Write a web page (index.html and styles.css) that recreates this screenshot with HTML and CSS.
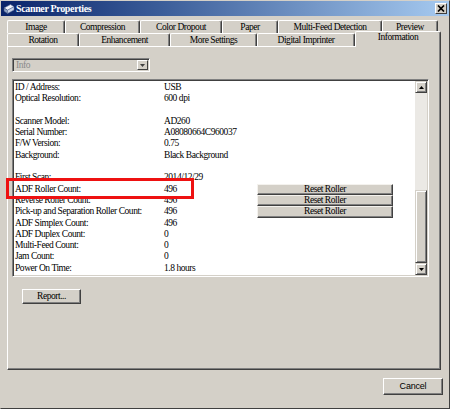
FILE: index.html
```html
<!DOCTYPE html>
<html>
<head>
<meta charset="utf-8">
<link rel="stylesheet" href="styles.css">
</head>
<body>
<div class="window">
  <div class="titlebar">
    <svg class="appicon" width="12" height="12" viewBox="0 0 12 12">
      <path d="M1 5 L7.5 1.5 L11 3.8 L4.5 7.2Z" fill="#f2f5fb" stroke="#5a6f98" stroke-width="0.6"/>
      <path d="M1 5 L4.5 7.2 L4.5 10.5 L1 8.3Z" fill="#8ea2c4" stroke="#3c4f78" stroke-width="0.5"/>
      <path d="M4.5 7.2 L11 3.8 L11 7 L4.5 10.5Z" fill="#c9d4e8" stroke="#5a6f98" stroke-width="0.5"/>
    </svg>
    <span class="title">Scanner Properties</span>
    <span class="close">
      <svg width="8" height="7" viewBox="0 0 8 7"><path d="M1 0.5 L7 6.5 M7 0.5 L1 6.5" stroke="#000" stroke-width="1.7"/></svg>
    </span>
  </div>
  <div class="content">
    <div class="tabs">
      <div class="tabrow row1">
        <div class="tab">Image</div>
        <div class="tab">Compression</div>
        <div class="tab">Color Dropout</div>
        <div class="tab">Paper</div>
        <div class="tab">Multi-Feed Detection</div>
        <div class="tab">Preview</div>
      </div>
      <div class="tabrow row2">
        <div class="tab">Rotation</div>
        <div class="tab">Enhancement</div>
        <div class="tab">More Settings</div>
        <div class="tab">Digital Imprinter</div>
        <div class="tab active">Information</div>
      </div>
    </div>
    <div class="panel">
      <div class="combo">
        <span class="combo-text">Info</span>
        <span class="combo-arrow"><svg width="5" height="3" viewBox="0 0 5 3"><path d="M0 0 H5 L2.5 3Z" fill="#404040"/></svg></span>
      </div>
      <div class="listbox">
        <div class="rows">
          <div class="row"><span>ID / Address:</span><span>USB</span></div>
          <div class="row"><span>Optical Resolution:</span><span>600 dpi</span></div>
          <div class="row"></div>
          <div class="row"><span>Scanner Model:</span><span>AD260</span></div>
          <div class="row"><span>Serial Number:</span><span>A08080664C960037</span></div>
          <div class="row"><span>F/W Version:</span><span>0.75</span></div>
          <div class="row"><span>Background:</span><span>Black Background</span></div>
          <div class="row"></div>
          <div class="row"><span>First Scan:</span><span>2014/12/29</span></div>
          <div class="row"><span>ADF Roller Count:</span><span>496</span><span class="rbtn">Reset Roller</span></div>
          <div class="row"><span>Reverse Roller Count:</span><span>496</span><span class="rbtn">Reset Roller</span></div>
          <div class="row"><span>Pick-up and Separation Roller Count:</span><span>496</span><span class="rbtn">Reset Roller</span></div>
          <div class="row"><span>ADF Simplex Count:</span><span>496</span></div>
          <div class="row"><span>ADF Duplex Count:</span><span>0</span></div>
          <div class="row"><span>Multi-Feed Count:</span><span>0</span></div>
          <div class="row"><span>Jam Count:</span><span>0</span></div>
          <div class="row"><span>Power On Time:</span><span>1.8 hours</span></div>
        </div>
        <div class="scrollbar">
          <div class="sb-btn"><svg width="5" height="3" viewBox="0 0 5 3"><path d="M0 3 H5 L2.5 0Z" fill="#000"/></svg></div>
          <div class="sb-track"><div class="sb-thumb"></div></div>
          <div class="sb-btn"><svg width="5" height="3" viewBox="0 0 5 3"><path d="M0 0 H5 L2.5 3Z" fill="#000"/></svg></div>
        </div>
      </div>
      <div class="btn report">Report...</div>
    </div>
    <div class="footer">
      <div class="btn cancel">Cancel</div>
    </div>
  </div>
  <div class="highlight"></div>
</div>
</body>
</html>
```
FILE: styles.css
```css
* { box-sizing: border-box; margin: 0; padding: 0; }
html, body { width: 450px; height: 409px; overflow: hidden; }
body {
  background: #d4d0c8;
  font-family: "Liberation Serif", serif;
  font-size: 9.5px;
  letter-spacing: -0.45px;
  color: #000;
}
.window {
  position: relative;
  width: 450px;
  height: 409px;
  background: #d4d0c8;
  border: 1px solid;
  border-color: #d4d0c8 #404040 #404040 #d4d0c8;
  display: flex;
  flex-direction: column;
}
.titlebar {
  height: 15px;
  display: flex;
  align-items: center;
  padding: 0 2px;
  background: linear-gradient(to right, #0a246a, #3a5c98 35%, #a6caf0);
}
.appicon { margin-right: 1px; flex: none; }
.title {
  color: #fff;
  font-weight: bold;
  font-size: 10px;
  letter-spacing: -0.35px;
}
.close {
  margin-left: auto;
  width: 12px;
  height: 11px;
  background: #d4d0c8;
  border: 1px solid;
  border-color: #fff #404040 #404040 #fff;
  display: flex;
  align-items: center;
  justify-content: center;
}
.content {
  flex: 1;
  display: flex;
  flex-direction: column;
  padding: 4px 6px 0 6px;
}
.tabrow {
  display: grid;
  height: 13px;
}
.row1 { grid-template-columns: 58px 75px 82px 56px 104px 56px; }
.row2 { grid-template-columns: 72px 91px 87px 98px 86px; }
.tab {
  height: 13px;
  border-top: 1px solid #fff;
  border-left: 1px solid #fff;
  border-right: 1px solid #404040;
  box-shadow: inset -1px 0 #808080;
  border-radius: 2px 2px 0 0;
  text-align: center;
  line-height: 12px;
  white-space: nowrap;
  background: #d4d0c8;
}
.tab.active {
  height: 16px;
  margin-top: -2px;
  position: relative;
  z-index: 1;
  line-height: 11px;
}
.panel {
  width: 434px;
  height: 324px;
  border: 1px solid;
  border-color: #fff #404040 #404040 #fff;
  box-shadow: inset -1px -1px #808080;
  padding: 11px 0 0 4px;
}
.combo {
  width: 138px;
  height: 14px;
  display: flex;
  align-items: center;
  border: 1px solid;
  border-color: #808080 #fff #fff #808080;
  box-shadow: inset 1px 1px #404040;
  padding: 0 1px 0 3px;
  color: #8a8a8a;
  margin-bottom: 7px;
}
.combo-arrow {
  margin-left: auto;
  width: 11px;
  height: 10px;
  border: 1px solid;
  border-color: #fff #404040 #404040 #fff;
  display: flex;
  align-items: center;
  justify-content: center;
}
.listbox {
  width: 417px;
  height: 198px;
  display: flex;
  background: #fff;
  border: 1px solid;
  border-color: #808080 #fff #fff #808080;
  box-shadow: inset 1px 1px #404040, inset -1px -1px #d4d0c8;
}
.rows {
  flex: 1;
  padding: 2px 0 0 2px;
}
.row {
  display: grid;
  grid-template-columns: 149px 93px 136px;
  height: 11.3px;
  line-height: 11.3px;
  white-space: nowrap;
}
.rbtn {
  background: #d4d0c8;
  border: 1px solid;
  border-color: #f4f2ee #404040 #404040 #f4f2ee;
  box-shadow: inset -1px -1px #808080;
  text-align: center;
  line-height: 9px;
}
.scrollbar {
  width: 12px;
  margin: 1px 1px 1px 0;
  display: flex;
  flex-direction: column;
}
.sb-btn {
  height: 12px;
  background: #d4d0c8;
  border: 1px solid;
  border-color: #d4d0c8 #404040 #404040 #d4d0c8;
  box-shadow: inset 1px 1px #fff, inset -1px -1px #808080;
  display: flex;
  align-items: center;
  justify-content: center;
}
.sb-track {
  flex: 1;
  background: #ebe9e5;
  display: flex;
  flex-direction: column;
  justify-content: flex-end;
}
.sb-thumb {
  height: 73px;
  background: #d4d0c8;
  border: 1px solid;
  border-color: #d4d0c8 #404040 #404040 #d4d0c8;
  box-shadow: inset 1px 1px #fff, inset -1px -1px #808080;
}
.btn {
  background: #d4d0c8;
  border: 1px solid;
  border-color: #fff #404040 #404040 #fff;
  box-shadow: inset -1px -1px #808080;
  text-align: center;
}
.report {
  width: 59px;
  height: 15px;
  line-height: 13px;
  margin: 12px 0 0 10px;
}
.footer {
  display: flex;
  justify-content: flex-end;
  padding-top: 8px;
}
.cancel {
  width: 60px;
  height: 17px;
  line-height: 15px;
  font-family: "Liberation Sans", sans-serif;
  font-size: 9px;
  letter-spacing: -0.2px;
}
.highlight {
  position: absolute;
  left: 5px;
  top: 177px;
  width: 188px;
  height: 21px;
  border: 3px solid #ee1111;
}
```
